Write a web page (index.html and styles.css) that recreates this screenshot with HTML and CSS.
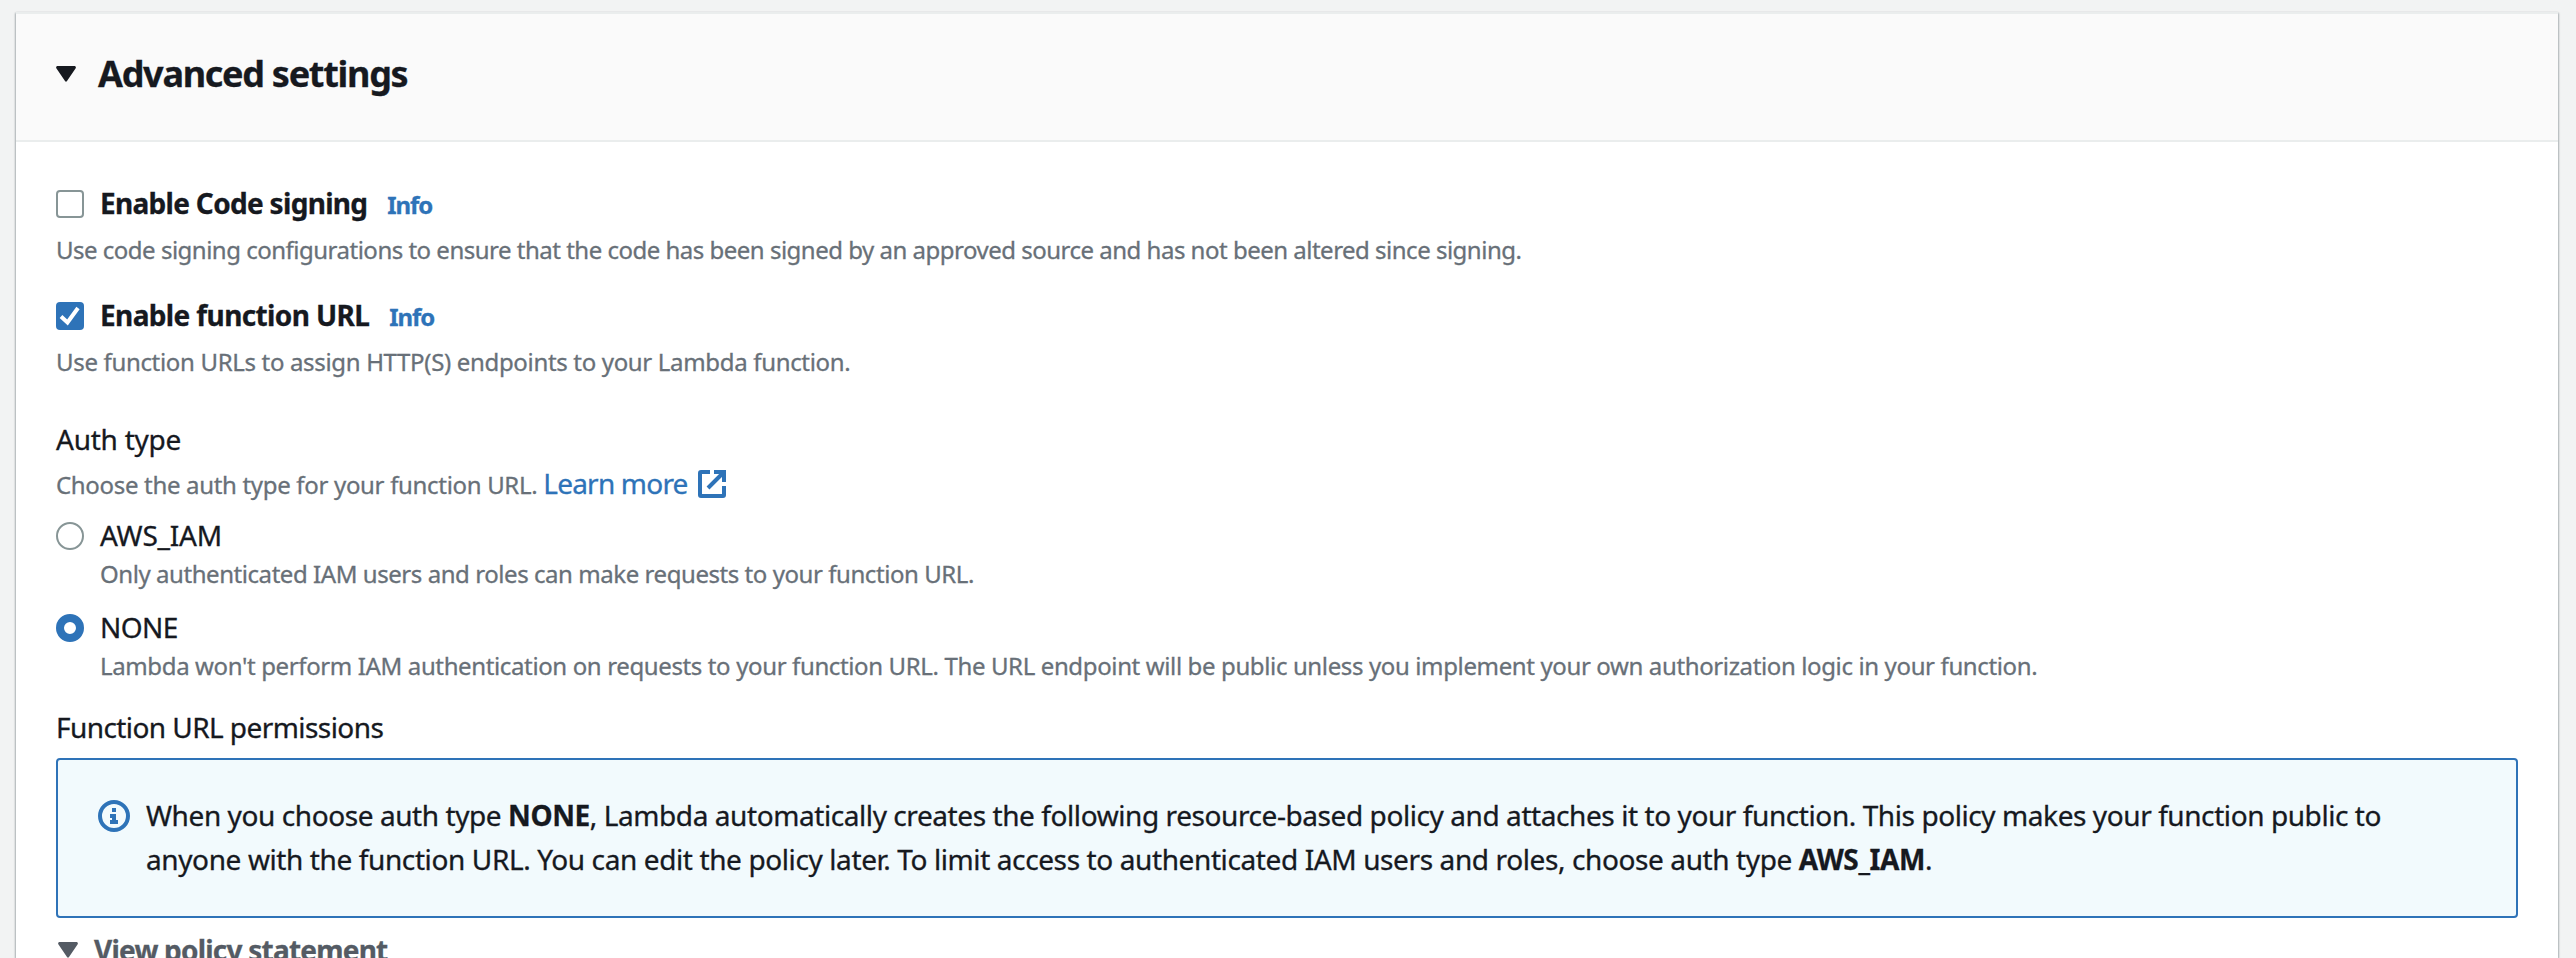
FILE: index.html
```html
<!DOCTYPE html>
<html lang="en">
<head>
<meta charset="utf-8">
<title>Advanced settings</title>
<link rel="stylesheet" href="styles.css">
</head>
<body>
<main class="panel">
  <header class="panel-header">
    <svg class="caret" width="20" height="16" viewBox="0 0 20 16"><path d="M1 0H19Q20.500 1 19.500 2.500L11 15Q10 16.500 9 15L.5 2.500Q-.5 1 1 0Z" fill="currentColor"/></svg>
    <h2 class="title"><span class="t-title">Advanced settings</span></h2>
  </header>
  <div class="content">
    <div class="option">
      <span class="checkbox"></span>
      <span class="label t-code">Enable Code signing</span>
      <a class="info">Info</a>
    </div>
    <p class="hint hint-code"><span class="t-d1">Use code signing configurations to ensure that the code has been signed by an approved source and has not been altered since signing.</span></p>
    <div class="option">
      <span class="checkbox checked"><svg width="28" height="28" viewBox="0 0 28 28"><path d="M5 14.500L11.500 20.500L22 6" fill="none" stroke="#fff" stroke-width="4"/></svg></span>
      <span class="label t-url">Enable function URL</span>
      <a class="info">Info</a>
    </div>
    <p class="hint hint-url"><span class="t-d2">Use function URLs to assign HTTP(S) endpoints to your Lambda function.</span></p>
    <h3 class="field-title"><span class="t-auth">Auth type</span></h3>
    <div class="learn">
      <span class="learn-hint t-d3">Choose the auth type for your function URL.</span>
      <a class="learn-link"><span class="t-learn">Learn more</span>
        <svg width="28" height="28" viewBox="0 0 28 28" fill="none" stroke="currentColor" stroke-width="4"><path d="M12 2H3Q2 2 2 3V25Q2 26 3 26H25Q26 26 26 25V16"/><path d="M16 2H26V12M26 2L10 18"/></svg></a>
    </div>
    <div class="radio-row">
      <span class="radio"></span>
      <div class="radio-text"><span class="radio-label t-iam">AWS_IAM</span><span class="radio-hint t-d4">Only authenticated IAM users and roles can make requests to your function URL.</span></div>
    </div>
    <div class="radio-row">
      <span class="radio selected"></span>
      <div class="radio-text"><span class="radio-label t-none">NONE</span><span class="radio-hint t-d5">Lambda won't perform IAM authentication on requests to your function URL. The URL endpoint will be public unless you implement your own authorization logic in your function.</span></div>
    </div>
    <h3 class="field-title permissions"><span class="t-perm">Function URL permissions</span></h3>
    <section class="alert">
      <svg class="alert-icon" width="32" height="32" viewBox="0 0 32 32"><circle cx="16" cy="16" r="14" fill="none" stroke="currentColor" stroke-width="4"/><path d="M14 8H18V12H14ZM12 14H18V20H20V24H12V20H14V18H12Z" fill="currentColor"/></svg>
      <p class="alert-text"><span class="t-a1">When you choose auth type <b>NONE</b>, Lambda automatically creates the following resource-based policy and attaches it to your function. This policy makes your function public to</span><br><span class="t-a2">anyone with the function URL. You can edit the policy later. To limit access to authenticated IAM users and roles, choose auth type <b>AWS_IAM</b>.</span></p>
    </section>
    <div class="policy">
      <svg class="caret" width="20" height="16" viewBox="0 0 20 16"><path d="M1 0H19Q20.500 1 19.500 2.500L11 15Q10 16.500 9 15L.5 2.500Q-.5 1 1 0Z" fill="currentColor"/></svg>
      <span class="t-view">View policy statement</span>
    </div>
  </div>
</main>
</body>
</html>
```

FILE: styles.css
```css
* { box-sizing: border-box; }
body { margin: 0; height: 958px; overflow: hidden; background: #f2f3f3; color: #16191f; font: 28px/44px "Noto Sans", sans-serif; padding: 12px 18px 0 16px; white-space: nowrap; -webkit-text-stroke: .3px; }
h2, h3, p { margin: 0; font-weight: 400; }
a { color: #2e73b8; }
svg { flex: none; display: block; }
.panel { height: 946px; background: #fff; border-top: 2px solid #eaeded; box-shadow: 0 1px 2px rgba(0,28,36,.4), 1px 1px 2px rgba(0,28,36,.15), -1px 1px 2px rgba(0,28,36,.15); }
.panel-header { height: 128px; background: #fafafa; border-bottom: 2px solid #eaeded; display: flex; padding: 38px 40px 0; }
.panel-header .caret { margin: 14px 22px 0 0; }
.title { font-size: 36px; font-weight: 700; line-height: 44px; }
.content { padding: 40px 40px 0; }
.option { display: flex; height: 44px; align-items: center; }
.checkbox { width: 28px; height: 28px; flex: none; border: 2px solid #879596; border-radius: 4px; margin-right: 16px; }
.checkbox.checked { background: #2e73b8; border: 0; }
.label { font-weight: 700; margin-right: 20px; padding-bottom: 2px; }
.info { font-size: 24px; font-weight: 700; padding-top: 2px; letter-spacing: -1.1px; }
.hint, .learn-hint, .radio-hint { font-size: 24px; color: #687078; }
.hint { height: 44px; line-height: 44px; padding-top: 2px; }
.hint-code { margin-bottom: 24px; }
.hint-url { margin-bottom: 36px; }
.field-title { font-size: 28px; height: 44px; line-height: 42px; }
.learn { display: flex; gap: 6px; height: 44px; align-items: center; }
.learn-hint { padding-top: 2px; }
.learn-link { display: flex; align-items: center; gap: 10px; line-height: 42px; }
.t-learn { padding-bottom: 2px; }
.radio-row { display: flex; height: 84px; margin-top: 8px; }
.radio { width: 28px; height: 28px; flex: none; border: 2px solid #879596; border-radius: 50%; margin: 8px 16px 0 0; }
.radio.selected { border: 8px solid #2e73b8; }
.radio-text { display: flex; flex-direction: column; align-items: flex-start; }
.radio-label { height: 40px; line-height: 42px; }
.radio-hint { line-height: 40px; }
.permissions { margin-top: 16px; }
.alert { display: flex; height: 160px; margin-top: 8px; padding: 34px 40px; background: #f2fafd; border: 2px solid #2e73b8; border-radius: 4px; }
.alert-icon { color: #2e73b8; margin: 6px 16px 0 0; }
.alert-text { margin-top: -1px; }
.policy { display: flex; color: #545b64; font-weight: 700; padding: 10px 0 0 2px; }
.policy .caret { margin: 14px 16px 0 0; }
.t-title { letter-spacing: -1.28px; }
.t-code { letter-spacing: -.69px; }
.t-url { letter-spacing: -.62px; }
.t-d1 { letter-spacing: -.5px; }
.t-d2 { letter-spacing: -.33px; }
.t-d3 { letter-spacing: -.32px; }
.t-d4 { letter-spacing: -.44px; }
.t-d5 { letter-spacing: -.37px; }
.t-auth { letter-spacing: -.25px; }
.t-learn { letter-spacing: -.8px; }
.t-iam { letter-spacing: -.2px; }
.t-none { letter-spacing: -.6px; }
.t-perm { letter-spacing: -.57px; }
.t-a1 { letter-spacing: -.42px; }
.t-a2 { letter-spacing: -.39px; }
.t-view { letter-spacing: -.78px; }
```
